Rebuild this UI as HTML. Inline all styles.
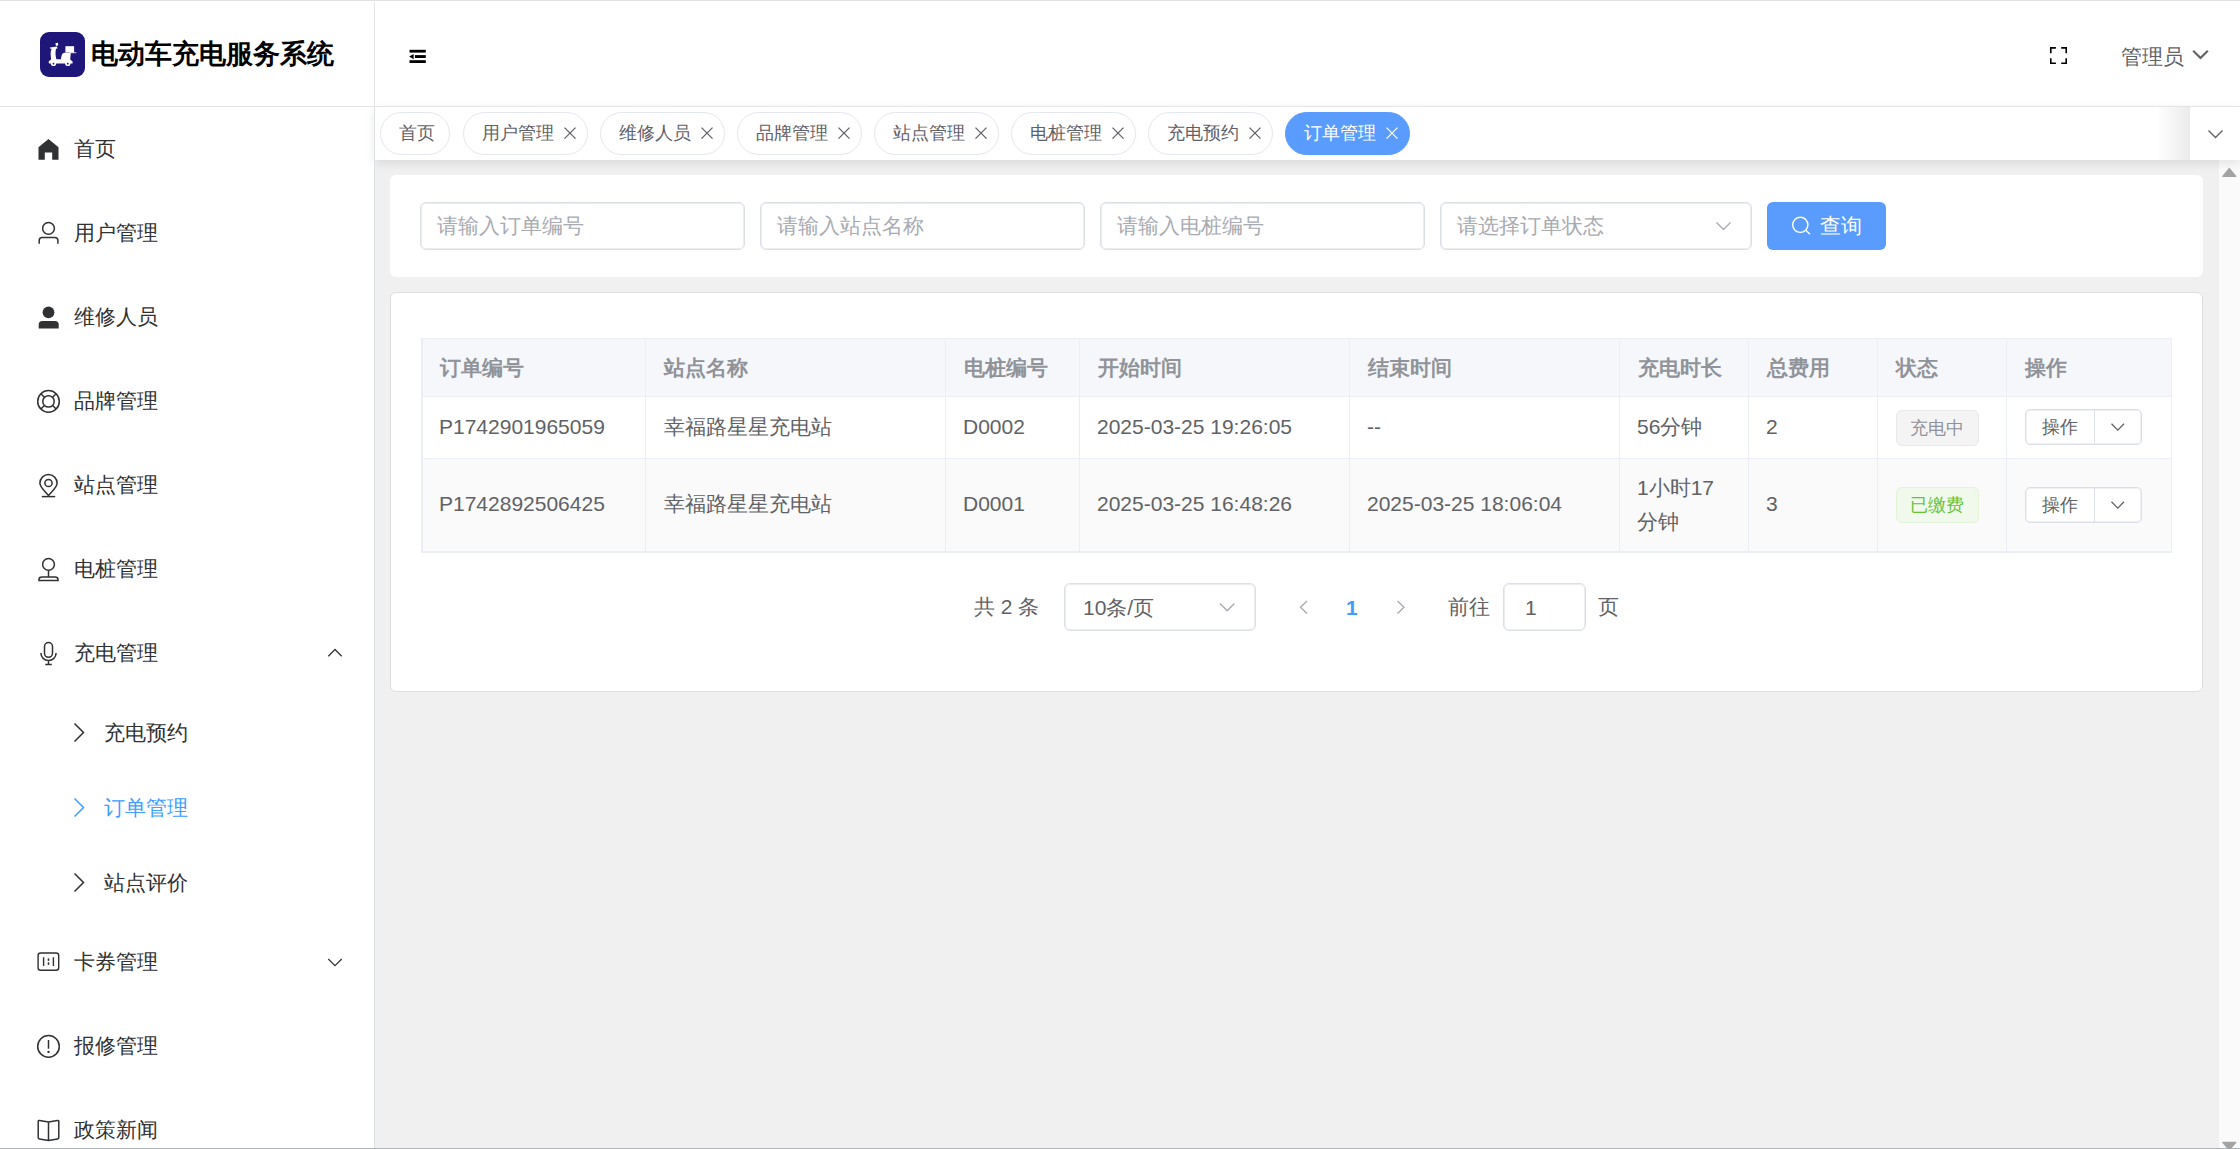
<!DOCTYPE html>
<html><head><meta charset="utf-8">
<style>
*{box-sizing:border-box;margin:0;padding:0}
html,body{width:2240px;height:1149px;overflow:hidden;background:#fff;font-family:"Liberation Sans",sans-serif}
.abs{position:absolute}
.t{position:absolute;white-space:nowrap;line-height:1}
.m{font-size:21px;color:#303133}
.tag{position:absolute;top:112px;height:43px;border:1px solid #e4e7ed;border-radius:22px;background:#fff}
.tg{position:absolute;white-space:nowrap;line-height:1;font-size:18px;color:#5f6167}
.inp{position:absolute;top:202px;height:48px;border:1px solid #dcdfe6;border-radius:6px;background:#fff;box-shadow:inset 0 0 0 1px rgba(220,223,230,.55)}
.bd{box-shadow:inset 0 0 0 1px rgba(220,223,230,.55)}
.ph{position:absolute;white-space:nowrap;line-height:1;font-size:21px;color:#a8abb2}
.th{position:absolute;white-space:nowrap;line-height:1;font-size:21px;font-weight:bold;color:#909399}
.td{position:absolute;white-space:nowrap;line-height:1;font-size:21px;color:#606266}
.vl{position:absolute;width:1px;background:#ebeef5}
.hl{position:absolute;height:1px;background:#ebeef5}
</style></head><body>

<div class="abs" style="left:0;top:0;width:2240px;height:1px;background:#dfe2df"></div>
<div class="abs" style="left:375px;top:160px;width:1865px;height:989px;background:#f0f0f0"></div>
<div class="abs" style="left:2218px;top:160px;width:22px;height:989px;background:#fafafa;border-left:1px solid #f0f0f0"></div>
<div class="abs" style="left:375px;top:107px;width:1865px;height:53px;background:#fff;box-shadow:0 3px 10px rgba(0,0,0,.10)"></div>
<div class="abs" style="left:0;top:106px;width:2240px;height:1px;background:#e4e4e4"></div>
<div class="abs" style="left:374px;top:2px;width:1px;height:104px;background:#e6e6e6"></div>
<div class="abs" style="left:374px;top:107px;width:1px;height:1041px;background:#dcdfe6"></div>
<div class="abs" style="left:40px;top:32px;width:45px;height:45px;border-radius:9px;background:#1f1679"></div>
<div class="t" style="left:91px;top:41px;font-size:27px;font-weight:bold;color:#000">电动车充电服务系统</div>
<div class="t" style="left:2121px;top:46px;font-size:21px;color:#606266">管理员</div>
<div class="t m" style="left:74px;top:138px;color:#303133">首页</div>
<div class="t m" style="left:74px;top:222px;color:#303133">用户管理</div>
<div class="t m" style="left:74px;top:306px;color:#303133">维修人员</div>
<div class="t m" style="left:74px;top:390px;color:#303133">品牌管理</div>
<div class="t m" style="left:74px;top:474px;color:#303133">站点管理</div>
<div class="t m" style="left:74px;top:558px;color:#303133">电桩管理</div>
<div class="t m" style="left:74px;top:642px;color:#303133">充电管理</div>
<div class="t m" style="left:104px;top:722px;color:#303133">充电预约</div>
<div class="t m" style="left:104px;top:797px;color:#409eff">订单管理</div>
<div class="t m" style="left:104px;top:872px;color:#303133">站点评价</div>
<div class="t m" style="left:74px;top:951px;color:#303133">卡券管理</div>
<div class="t m" style="left:74px;top:1035px;color:#303133">报修管理</div>
<div class="t m" style="left:74px;top:1119px;color:#303133">政策新闻</div>
<div class="tag" style="left:380px;width:70px"></div>
<div class="tg" style="left:399px;top:124px">首页</div>
<div class="tag" style="left:463px;width:125px"></div>
<div class="tg" style="left:482px;top:124px">用户管理</div>
<div class="tag" style="left:600px;width:125px"></div>
<div class="tg" style="left:619px;top:124px">维修人员</div>
<div class="tag" style="left:737px;width:125px"></div>
<div class="tg" style="left:756px;top:124px">品牌管理</div>
<div class="tag" style="left:874px;width:125px"></div>
<div class="tg" style="left:893px;top:124px">站点管理</div>
<div class="tag" style="left:1011px;width:125px"></div>
<div class="tg" style="left:1030px;top:124px">电桩管理</div>
<div class="tag" style="left:1148px;width:125px"></div>
<div class="tg" style="left:1167px;top:124px">充电预约</div>
<div class="tag" style="left:1285px;width:125px;background:#5a9cfd;border-color:#5a9cfd"></div>
<div class="tg" style="left:1304px;top:124px;color:#fff">订单管理</div>
<div class="abs" style="left:2156px;top:107px;width:34px;height:53px;background:linear-gradient(to right,rgba(0,0,0,0),rgba(0,0,0,.08))"></div>
<div class="abs" style="left:2190px;top:107px;width:50px;height:53px;background:#fff"></div>
<div class="abs" style="left:390px;top:175px;width:1813px;height:102px;border-radius:6px;background:#fff"></div>
<div class="inp" style="left:420px;width:325px"></div>
<div class="ph" style="left:437px;top:215px">请输入订单编号</div>
<div class="inp" style="left:760px;width:325px"></div>
<div class="ph" style="left:777px;top:215px">请输入站点名称</div>
<div class="inp" style="left:1100px;width:325px"></div>
<div class="ph" style="left:1117px;top:215px">请输入电桩编号</div>
<div class="inp" style="left:1440px;width:312px"></div>
<div class="ph" style="left:1457px;top:215px">请选择订单状态</div>
<div class="abs" style="left:1767px;top:202px;width:119px;height:48px;border-radius:6px;background:#5a9cfd"></div>
<div class="t" style="left:1820px;top:215px;font-size:21px;color:#fff">查询</div>
<div class="abs" style="left:390px;top:292px;width:1813px;height:400px;border-radius:6px;background:#fff;border:1px solid #dedede"></div>
<div class="abs" style="left:421px;top:338px;width:1751px;height:58px;background:#f5f7fa"></div>
<div class="abs" style="left:421px;top:459px;width:1751px;height:92px;background:#fafafa"></div>
<div class="hl" style="left:421px;top:338px;width:1751px"></div>
<div class="hl" style="left:421px;top:396px;width:1751px"></div>
<div class="hl" style="left:421px;top:458px;width:1751px"></div>
<div class="hl" style="left:421px;top:551px;width:1751px"></div>
<div class="vl" style="left:422px;top:338px;height:215px"></div>
<div class="hl" style="left:421px;top:552px;width:1751px"></div>
<div class="vl" style="left:421px;top:338px;height:214px"></div>
<div class="vl" style="left:645px;top:338px;height:214px"></div>
<div class="vl" style="left:945px;top:338px;height:214px"></div>
<div class="vl" style="left:1079px;top:338px;height:214px"></div>
<div class="vl" style="left:1349px;top:338px;height:214px"></div>
<div class="vl" style="left:1619px;top:338px;height:214px"></div>
<div class="vl" style="left:1748px;top:338px;height:214px"></div>
<div class="vl" style="left:1877px;top:338px;height:214px"></div>
<div class="vl" style="left:2006px;top:338px;height:214px"></div>
<div class="vl" style="left:2171px;top:338px;height:214px"></div>
<div class="th" style="left:440px;top:357px">订单编号</div>
<div class="th" style="left:664px;top:357px">站点名称</div>
<div class="th" style="left:964px;top:357px">电桩编号</div>
<div class="th" style="left:1098px;top:357px">开始时间</div>
<div class="th" style="left:1368px;top:357px">结束时间</div>
<div class="th" style="left:1638px;top:357px">充电时长</div>
<div class="th" style="left:1767px;top:357px">总费用</div>
<div class="th" style="left:1896px;top:357px">状态</div>
<div class="th" style="left:2025px;top:357px">操作</div>
<div class="td" style="left:439px;top:416px">P1742901965059</div>
<div class="td" style="left:664px;top:416px">幸福路星星充电站</div>
<div class="td" style="left:963px;top:416px">D0002</div>
<div class="td" style="left:1097px;top:416px">2025-03-25 19:26:05</div>
<div class="td" style="left:1367px;top:416px">--</div>
<div class="td" style="left:1637px;top:416px">56分钟</div>
<div class="td" style="left:1766px;top:416px">2</div>
<div class="td" style="left:439px;top:493px">P1742892506425</div>
<div class="td" style="left:664px;top:493px">幸福路星星充电站</div>
<div class="td" style="left:963px;top:493px">D0001</div>
<div class="td" style="left:1097px;top:493px">2025-03-25 16:48:26</div>
<div class="td" style="left:1367px;top:493px">2025-03-25 18:06:04</div>
<div class="td" style="left:1766px;top:493px">3</div>
<div class="td" style="left:1637px;top:477px">1小时17</div>
<div class="td" style="left:1637px;top:511px">分钟</div>
<div class="abs" style="left:1896px;top:410px;width:83px;height:36px;border-radius:6px;background:#f4f4f5;border:1px solid #e9e9eb"></div>
<div class="tg" style="left:1910px;top:419px;color:#909399">充电中</div>
<div class="abs" style="left:1896px;top:487px;width:83px;height:36px;border-radius:6px;background:#f0f9eb;border:1px solid #e1f3d8"></div>
<div class="tg" style="left:1910px;top:496px;color:#67c23a">已缴费</div>
<div class="abs" style="left:2025px;top:409px;width:117px;height:36px;border-radius:5px;background:#fff;border:1px solid #dcdfe6;box-shadow:inset 0 0 0 1px rgba(220,223,230,.45)"></div>
<div class="abs" style="left:2094px;top:409px;width:1px;height:36px;background:#dcdfe6"></div>
<div class="tg" style="left:2042px;top:418px;color:#606266">操作</div>
<div class="abs" style="left:2025px;top:487px;width:117px;height:36px;border-radius:5px;background:#fff;border:1px solid #dcdfe6;box-shadow:inset 0 0 0 1px rgba(220,223,230,.45)"></div>
<div class="abs" style="left:2094px;top:487px;width:1px;height:36px;background:#dcdfe6"></div>
<div class="tg" style="left:2042px;top:496px;color:#606266">操作</div>
<div class="td" style="left:974px;top:596px">共 2 条</div>
<div class="abs" style="left:1064px;top:583px;width:192px;height:48px;border:1px solid #dcdfe6;border-radius:6px;box-shadow:inset 0 0 0 1px rgba(220,223,230,.55)"></div>
<div class="td" style="left:1083px;top:597px">10条/页</div>
<div class="t" style="left:1346px;top:597px;font-size:21px;font-weight:bold;color:#409eff">1</div>
<div class="td" style="left:1448px;top:596px">前往</div>
<div class="abs" style="left:1503px;top:583px;width:83px;height:48px;border:1px solid #dcdfe6;border-radius:6px;box-shadow:inset 0 0 0 1px rgba(220,223,230,.55)"></div>
<div class="td" style="left:1525px;top:597px">1</div>
<div class="td" style="left:1598px;top:596px">页</div>
<div class="abs" style="left:0;top:1148px;width:2240px;height:1px;background:#aab4ba"></div>
<svg class="abs" style="left:0;top:0;overflow:visible" width="2240" height="1149" viewBox="0 0 2240 1149"><path d="M38.5,147.2 L48.5,139.1 L58.5,147.2 V159.8 H52.2 V152.4 H44.8 V159.8 H38.5 Z" fill="#303133"/><g fill="none" stroke="#303133" stroke-width="1.5"><circle cx="48.5" cy="228.4" r="5.9"/><path d="M39.2,243.8 V240.6 Q39.2,237.6 42.2,237.6 H54.8 Q57.9,237.6 57.9,240.6 V243.8"/></g><g fill="#303133"><circle cx="48.5" cy="312.3" r="5.9"/><path d="M38.7,328.4 V324.5 Q38.7,321 42.5,321 H54.9 Q58.7,321 58.7,324.5 V328.4 Z"/></g><g fill="none" stroke="#303133" stroke-width="1.5"><circle cx="48.5" cy="401.4" r="10.8"/><circle cx="48.5" cy="401.4" r="5.7"/><path d="M44.4,397.29999999999995 L40.9,393.79999999999995 M52.6,397.29999999999995 L56.1,393.79999999999995 M44.4,405.5 L40.9,409.0 M52.6,405.5 L56.1,409.0"/></g><g fill="none" stroke="#303133" stroke-width="1.5"><path d="M48.5,495.5 C44.2,490.6 39.9,487 39.9,483.2 A8.6,8.6 0 0 1 57.1,483.2 C57.1,487 52.8,490.6 48.5,495.5 Z"/><circle cx="48.5" cy="483" r="3.6"/><path d="M41.8,496.6 H55.2"/></g><g fill="none" stroke="#303133" stroke-width="1.5"><circle cx="48.5" cy="564.4" r="5.9"/><path d="M48.5,570.3 V577 M39,580.6 V579.5 Q39,577 42,577 H55 Q58,577 58,579.5 V580.6 Z"/></g><g fill="none" stroke="#303133" stroke-width="1.5"><rect x="44.5" y="642.6" width="8" height="14.7" rx="4"/><path d="M40.9,653 A7.6,7.6 0 0 0 56.1,653 M48.5,660.6 V664.6 M45.3,664.6 H51.8"/></g><g fill="none" stroke="#303133" stroke-width="1.4"><rect x="38.1" y="953" width="20.6" height="17.2" rx="2.5"/><path d="M43.6,957.3 V966 M53.4,957.3 V966"/></g><g fill="#303133"><ellipse cx="48.5" cy="959.7" rx="0.9" ry="1.4"/><ellipse cx="48.5" cy="963.7" rx="0.9" ry="1.4"/></g><g fill="none" stroke="#303133" stroke-width="1.5"><circle cx="48.5" cy="1046.4" r="10.8"/><path d="M48.5,1040 V1048.7"/></g><circle cx="48.5" cy="1051.9" r="1.2" fill="#303133"/><g fill="none" stroke="#303133" stroke-width="1.5" stroke-linejoin="round"><path d="M48.5,1121.9 L39.5,1120.5 Q38.2,1120.3 38.2,1121.6 V1137.5 Q38.2,1138.8 39.5,1139 L48.5,1140.5 L57.5,1139 Q58.8,1138.8 58.8,1137.5 V1121.6 Q58.8,1120.3 57.5,1120.5 Z M48.5,1121.9 V1140.5"/></g><path d="M74.5,723.5 L83.5,732.5 L74.5,741.5" fill="none" stroke="#303133" stroke-width="1.5"/><path d="M74.5,798.5 L83.5,807.5 L74.5,816.5" fill="none" stroke="#409eff" stroke-width="1.5"/><path d="M74.5,873.5 L83.5,882.5 L74.5,891.5" fill="none" stroke="#303133" stroke-width="1.5"/><path d="M328.3,656.2 L335,649.5 L341.7,656.2" fill="none" stroke="#303133" stroke-width="1.25"/><path d="M328.3,959 L335,965.6 L341.7,959" fill="none" stroke="#303133" stroke-width="1.25"/><g fill="#000"><rect x="409.5" y="49.8" width="16.3" height="2.8"/><rect x="414.9" y="55.1" width="10.9" height="2.9"/><rect x="409.5" y="60.2" width="16.3" height="2.8"/><path d="M409.2,56.5 L413.6,53.9 V59.2 Z"/></g><path d="M2050.8,53.2 V47.9 H2055.9 M2061.2,47.9 H2066.2 V53.2 M2066.2,58.2 V63.2 H2061.2 M2055.9,63.2 H2050.8 V58.2" fill="none" stroke="#000" stroke-width="1.6"/><path d="M2193.2,50.8 L2200.5,58 L2207.8,50.8" fill="none" stroke="#606266" stroke-width="2.2"/><path d="M564.5,127.6 L575.5,138.6 M575.5,127.6 L564.5,138.6" stroke="#5f6167" stroke-width="1.3"/><path d="M701.5,127.6 L712.5,138.6 M712.5,127.6 L701.5,138.6" stroke="#5f6167" stroke-width="1.3"/><path d="M838.5,127.6 L849.5,138.6 M849.5,127.6 L838.5,138.6" stroke="#5f6167" stroke-width="1.3"/><path d="M975.5,127.6 L986.5,138.6 M986.5,127.6 L975.5,138.6" stroke="#5f6167" stroke-width="1.3"/><path d="M1112.5,127.6 L1123.5,138.6 M1123.5,127.6 L1112.5,138.6" stroke="#5f6167" stroke-width="1.3"/><path d="M1249.5,127.6 L1260.5,138.6 M1260.5,127.6 L1249.5,138.6" stroke="#5f6167" stroke-width="1.3"/><path d="M1386.5,127.6 L1397.5,138.6 M1397.5,127.6 L1386.5,138.6" stroke="#fff" stroke-width="1.3"/><path d="M2208.5,130.5 L2215.5,137.5 L2222.5,130.5" fill="none" stroke="#606266" stroke-width="1.4"/><path d="M1716.5,222.5 L1723.5,229.5 L1730.5,222.5" fill="none" stroke="#a8abb2" stroke-width="1.4"/><g fill="none" stroke="#fff" stroke-width="1.4"><circle cx="1800.3" cy="224.8" r="7.6"/><path d="M1805.8,230.3 L1810,234.3"/></g><path d="M2111.5,423.8 L2117.8,430.1 L2124,423.8" fill="none" stroke="#606266" stroke-width="1.3"/><path d="M2111.5,501.8 L2117.8,508.1 L2124,501.8" fill="none" stroke="#606266" stroke-width="1.3"/><path d="M1220,603.5 L1227.2,610.7 L1234.4,603.5" fill="none" stroke="#a8abb2" stroke-width="1.4"/><path d="M1307,601 L1300.5,607.2 L1307,613.4" fill="none" stroke="#a8abb2" stroke-width="1.4"/><path d="M1397.5,601 L1404,607.2 L1397.5,613.4" fill="none" stroke="#a8abb2" stroke-width="1.4"/><path d="M2229.3,167.5 L2236.3,176 Q2237,177 2235.8,177 H2222.8 Q2221.6,177 2222.3,176 Z" fill="#a3a3a3"/><path d="M2222.8,1141.7 H2235.8 Q2237,1141.7 2236.3,1142.7 L2229.3,1151 L2222.3,1142.7 Q2221.6,1141.7 2222.8,1141.7 Z" fill="#a3a3a3"/><g fill="#fff"><path d="M55.4,43.2 L57.9,42.8 L58.3,45.2 L56,46 Z"/><path d="M50,47.4 L57,46.5 L57.5,48.4 L56,48.8 C55.4,51.5 55.2,55 56.4,59.2 L61,59.2 C61.2,56 62,53.5 64,52.8 L70.8,52.8 L70.2,59.5 L72.6,61.5 L72.6,63.6 L49,63.6 L48.6,61.6 L51.2,59.2 C50.4,55 50.4,51.5 51.6,48.8 L50,48.5 Z"/><rect x="65.4" y="46.2" width="8.7" height="6.4"/><rect x="70" y="52.4" width="6.3" height="0.8"/><circle cx="53.5" cy="63.5" r="2.6"/><circle cx="67.8" cy="63.5" r="2.6"/></g><g fill="#1f1679"><circle cx="53.5" cy="63.7" r="0.9"/><circle cx="67.8" cy="63.7" r="0.9"/></g></svg>
</body></html>
